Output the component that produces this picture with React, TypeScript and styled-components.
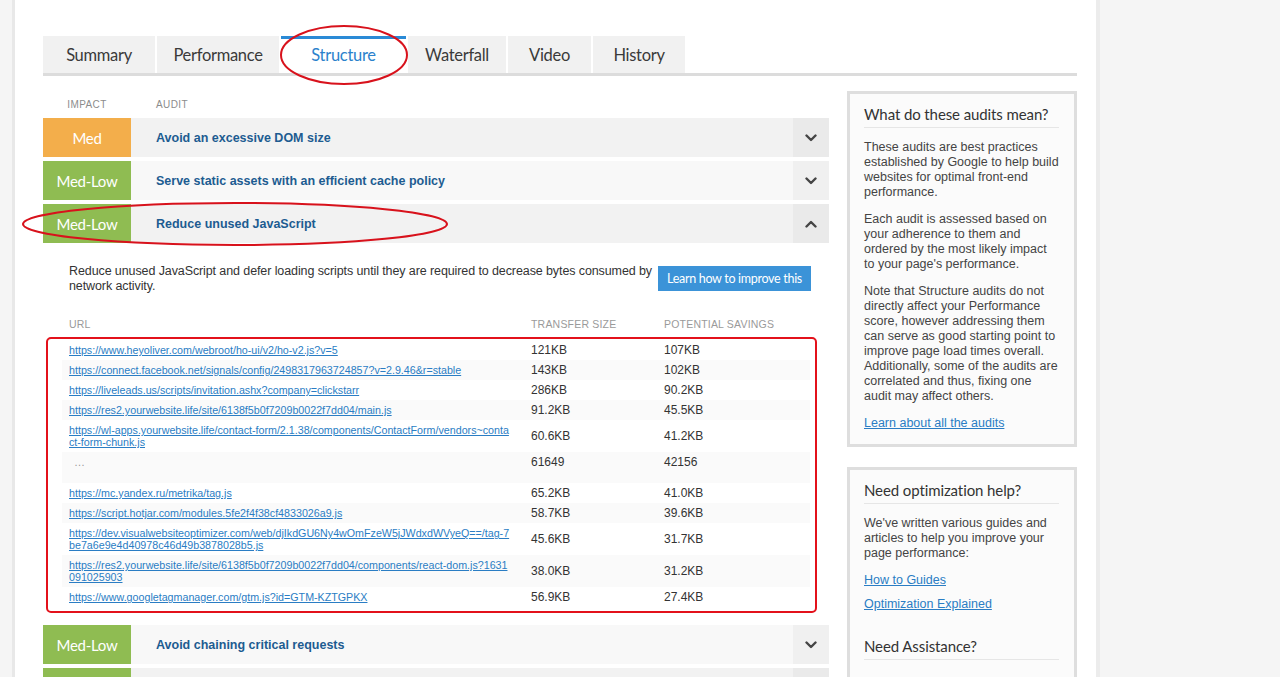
import styled, { createGlobalStyle } from "styled-components";

const GlobalStyle = createGlobalStyle`
  html, body {
    margin: 0;
    padding: 0;
  }
  body {
    background: #f5f5f5;
    font-family: "Liberation Sans", Arial, sans-serif;
    color: #333;
  }
`;

const GREEN = "#8fbc52";
const ORANGE = "#f3ae4b";
const COLS = "462px 133px 1fr";

const Page = styled.div`
  position: relative;
  height: 677px;
  overflow: hidden;
  padding-left: 12px;
  background: #f5f5f5;
`;

const Panel = styled.div`
  box-sizing: border-box;
  width: 1088px;
  min-height: 677px;
  background: #fff;
  border-left: 3px solid #e8e8e8;
  border-right: 4px solid #ececec;
  padding: 36px 19px 0 28px;
`;

const TabBar = styled.div`
  display: flex;
  gap: 2px;
  border-bottom: 3px solid #dcdcdc;
`;

const Tab = styled.div<{ $w: number; $active?: boolean }>`
  box-sizing: border-box;
  width: ${(p) => p.$w}px;
  height: 37px;
  padding-bottom: 3px;
  display: flex;
  align-items: center;
  justify-content: center;
  font-family: Lato, "Open Sans", sans-serif;
  font-size: 16.5px;
  letter-spacing: -0.3px;
  color: ${(p) => (p.$active ? "#2b82cc" : "#3a3a3a")};
  background: ${(p) => (p.$active ? "#fff" : "#f1f1f1")};
  border-top: 3px solid ${(p) => (p.$active ? "#2a8ad6" : "#f1f1f1")};
`;

const Main = styled.div`
  display: grid;
  grid-template-columns: 786px 230px;
  column-gap: 18px;
  margin-top: 15px;
  align-items: start;
`;

const HeadRow = styled.div`
  height: 27px;
  display: flex;
  align-items: center;
  font-size: 10px;
  letter-spacing: 0.4px;
  color: #8c8c8c;
`;

const HeadImpact = styled.div`
  width: 88px;
  text-align: center;
`;

const HeadAudit = styled.div`
  padding-left: 25px;
`;

const AuditRow = styled.div<{ $shade: string }>`
  display: flex;
  height: 39px;
  margin-bottom: 4px;
  background: ${(p) => p.$shade};
`;

const Badge = styled.div<{ $color: string }>`
  width: 88px;
  display: flex;
  align-items: center;
  justify-content: center;
  background: ${(p) => p.$color};
  color: #fff;
  font-family: Lato, "Open Sans", sans-serif;
  font-size: 15px;
  letter-spacing: -0.3px;
`;

const AuditTitle = styled.div`
  flex: 1;
  display: flex;
  align-items: center;
  padding-left: 25px;
  font-size: 12.5px;
  font-weight: bold;
  color: #1d5c91;
`;

const Toggle = styled.div`
  width: 36px;
  display: flex;
  align-items: center;
  justify-content: center;
  background: rgba(0, 0, 0, 0.03);
`;

const Details = styled.div`
  margin-top: -4px;
  padding: 21px 0 12px 0;
`;

const DescRow = styled.div`
  display: flex;
  justify-content: space-between;
  align-items: flex-start;
  padding: 0 18px 0 26px;
`;

const Desc = styled.p`
  margin: 0;
  width: 586px;
  font-size: 12.5px;
  line-height: 15px;
  letter-spacing: -0.1px;
  color: #333;
`;

const LearnButton = styled.div`
  margin-top: 2px;
  width: 153px;
  height: 25px;
  display: flex;
  align-items: center;
  justify-content: center;
  background: #3b93d8;
  color: #fff;
  font-family: Lato, "Open Sans", sans-serif;
  font-size: 12.5px;
  letter-spacing: -0.3px;
`;

const TableHead = styled.div`
  display: grid;
  grid-template-columns: ${COLS};
  margin: 24px 18px 0 19px;
  font-size: 10.5px;
  line-height: 12px;
  color: #9a9a9a;
  text-transform: uppercase;
  letter-spacing: 0.2px;

  & > div {
    padding: 0 7px;
  }
`;

const Frame = styled.div`
  margin: 7px 0 0 3px;
  width: 771px;
  box-sizing: border-box;
  border: 2px solid #e3111b;
  border-radius: 5px;
  padding: 1px 5px 4px 14px;
`;

const Row = styled.div<{ $stripe: boolean; $top?: boolean; $h?: number }>`
  display: grid;
  grid-template-columns: ${COLS};
  align-items: ${(p) => (p.$top ? "start" : "center")};
  ${(p) => (p.$h ? `height: ${p.$h}px;` : "")}
  background: ${(p) => (p.$stripe ? "#fafafa" : "#fff")};
`;

const UrlCell = styled.div`
  padding: 4px 7px;
  font-size: 10.7px;
  line-height: 12px;
  white-space: nowrap;

  a {
    color: #2a7dc4;
    text-decoration: underline;
  }
`;

const Dots = styled.div`
  padding: 4px 7px 4px 12px;
  font-size: 11px;
  line-height: 12px;
  color: #999;
`;

const ValueCell = styled.div`
  padding: 4px 7px;
  font-size: 12px;
  line-height: 12px;
  color: #333;
`;

const Side = styled.div`
  display: flex;
  flex-direction: column;
  gap: 20px;
`;

const Box = styled.div`
  border: 3px solid #dedede;
  background: #fbfbfb;
  padding: 10px 15px 13px 14px;
`;

const BoxTitle = styled.div`
  font-family: Lato, "Open Sans", sans-serif;
  font-size: 15px;
  line-height: 20px;
  letter-spacing: -0.1px;
  white-space: nowrap;
  color: #333;
  padding-bottom: 3px;
  border-bottom: 1px solid #e6e6e6;
  margin-bottom: 12px;
`;

const BoxText = styled.p`
  margin: 0 0 12px;
  font-size: 12.5px;
  line-height: 15px;
  color: #444;
`;

const BoxLink = styled.a<{ $gap?: number }>`
  display: block;
  font-size: 12.5px;
  line-height: 15px;
  color: #2a7dc4;
  text-decoration: underline;
  margin-bottom: ${(p) => p.$gap ?? 0}px;
`;

const Overlay = styled.svg`
  position: absolute;
  left: 0;
  top: 0;
  pointer-events: none;
`;

function Chevron({ up }: { up?: boolean }) {
  return (
    <svg width="12" height="8" viewBox="0 0 12 8">
      <polyline
        points={up ? "1.5,6.5 6,2 10.5,6.5" : "1.5,1.5 6,6 10.5,1.5"}
        fill="none"
        stroke="#454545"
        strokeWidth="2.4"
        strokeLinecap="round"
        strokeLinejoin="round"
      />
    </svg>
  );
}

const tabs = [
  { label: "Summary", w: 112 },
  { label: "Performance", w: 122 },
  { label: "Structure", w: 125, active: true },
  { label: "Waterfall", w: 98 },
  { label: "Video", w: 83 },
  { label: "History", w: 92 },
];

const rows: { url: string[]; size: string; save: string; dots?: boolean }[] = [
  { url: ["https://www.heyoliver.com/webroot/ho-ui/v2/ho-v2.js?v=5"], size: "121KB", save: "107KB" },
  { url: ["https://connect.facebook.net/signals/config/2498317963724857?v=2.9.46&r=stable"], size: "143KB", save: "102KB" },
  { url: ["https://liveleads.us/scripts/invitation.ashx?company=clickstarr"], size: "286KB", save: "90.2KB" },
  { url: ["https://res2.yourwebsite.life/site/6138f5b0f7209b0022f7dd04/main.js"], size: "91.2KB", save: "45.5KB" },
  {
    url: ["https://wl-apps.yourwebsite.life/contact-form/2.1.38/components/ContactForm/vendors~conta", "ct-form-chunk.js"],
    size: "60.6KB",
    save: "41.2KB",
  },
  { url: [], size: "61649", save: "42156", dots: true },
  { url: ["https://mc.yandex.ru/metrika/tag.js"], size: "65.2KB", save: "41.0KB" },
  { url: ["https://script.hotjar.com/modules.5fe2f4f38cf4833026a9.js"], size: "58.7KB", save: "39.6KB" },
  {
    url: ["https://dev.visualwebsiteoptimizer.com/web/djIkdGU6Ny4wOmFzeW5jJWdxdWVyeQ==/tag-7", "be7a6e9e4d40978c46d49b3878028b5.js"],
    size: "45.6KB",
    save: "31.7KB",
  },
  {
    url: ["https://res2.yourwebsite.life/site/6138f5b0f7209b0022f7dd04/components/react-dom.js?1631", "091025903"],
    size: "38.0KB",
    save: "31.2KB",
  },
  { url: ["https://www.googletagmanager.com/gtm.js?id=GTM-KZTGPKX"], size: "56.9KB", save: "27.4KB" },
];

function App() {
  return (
    <>
      <GlobalStyle />
      <Page>
        <Panel>
          <TabBar>
            {tabs.map((t) => (
              <Tab key={t.label} $w={t.w} $active={t.active}>
                {t.label}
              </Tab>
            ))}
          </TabBar>

          <Main>
            <div>
              <HeadRow>
                <HeadImpact>IMPACT</HeadImpact>
                <HeadAudit>AUDIT</HeadAudit>
              </HeadRow>

              <AuditRow $shade="#f2f2f2">
                <Badge $color={ORANGE}>Med</Badge>
                <AuditTitle>Avoid an excessive DOM size</AuditTitle>
                <Toggle>
                  <Chevron />
                </Toggle>
              </AuditRow>
              <AuditRow $shade="#f8f8f8">
                <Badge $color={GREEN}>Med-Low</Badge>
                <AuditTitle>Serve static assets with an efficient cache policy</AuditTitle>
                <Toggle>
                  <Chevron />
                </Toggle>
              </AuditRow>
              <AuditRow $shade="#f2f2f2">
                <Badge $color={GREEN}>Med-Low</Badge>
                <AuditTitle>Reduce unused JavaScript</AuditTitle>
                <Toggle>
                  <Chevron up />
                </Toggle>
              </AuditRow>

              <Details>
                <DescRow>
                  <Desc>
                    Reduce unused JavaScript and defer loading scripts until they are required to decrease bytes consumed
                    by network activity.
                  </Desc>
                  <LearnButton>Learn how to improve this</LearnButton>
                </DescRow>

                <TableHead>
                  <div>URL</div>
                  <div>Transfer Size</div>
                  <div>Potential Savings</div>
                </TableHead>

                <Frame>
                  {rows.map((r, i) =>
                    r.dots ? (
                      <Row key={i} $stripe={i % 2 === 1} $top $h={31}>
                        <Dots>…</Dots>
                        <ValueCell>{r.size}</ValueCell>
                        <ValueCell>{r.save}</ValueCell>
                      </Row>
                    ) : (
                      <Row key={i} $stripe={i % 2 === 1}>
                        <UrlCell>
                          <a>
                            {r.url.map((line, j) => (
                              <span key={j}>
                                {j > 0 && <br />}
                                {line}
                              </span>
                            ))}
                          </a>
                        </UrlCell>
                        <ValueCell>{r.size}</ValueCell>
                        <ValueCell>{r.save}</ValueCell>
                      </Row>
                    )
                  )}
                </Frame>
              </Details>

              <AuditRow $shade="#f8f8f8">
                <Badge $color={GREEN}>Med-Low</Badge>
                <AuditTitle>Avoid chaining critical requests</AuditTitle>
                <Toggle>
                  <Chevron />
                </Toggle>
              </AuditRow>
              <AuditRow $shade="#f2f2f2">
                <Badge $color={GREEN} />
                <AuditTitle />
                <Toggle />
              </AuditRow>
            </div>

            <Side>
              <Box>
                <BoxTitle>What do these audits mean?</BoxTitle>
                <BoxText>
                  These audits are best practices established by Google to help build websites for optimal front-end
                  performance.
                </BoxText>
                <BoxText>
                  Each audit is assessed based on your adherence to them and ordered by the most likely impact to your
                  page's performance.
                </BoxText>
                <BoxText>
                  Note that Structure audits do not directly affect your Performance score, however addressing them can
                  serve as good starting point to improve page load times overall. Additionally, some of the audits are
                  correlated and thus, fixing one audit may affect others.
                </BoxText>
                <BoxLink>Learn about all the audits</BoxLink>
              </Box>
              <Box>
                <BoxTitle>Need optimization help?</BoxTitle>
                <BoxText>We've written various guides and articles to help you improve your page performance:</BoxText>
                <BoxLink $gap={9}>How to Guides</BoxLink>
                <BoxLink $gap={24}>Optimization Explained</BoxLink>
                <BoxTitle>Need Assistance?</BoxTitle>
              </Box>
            </Side>
          </Main>
        </Panel>

        <Overlay width="1280" height="677" viewBox="0 0 1280 677">
          <ellipse cx="344" cy="55" rx="63" ry="29" fill="none" stroke="#d8121c" strokeWidth="2" />
          <ellipse cx="235" cy="224" rx="212" ry="21" fill="none" stroke="#d8121c" strokeWidth="2" />
        </Overlay>
      </Page>
    </>
  );
}

export default App;
